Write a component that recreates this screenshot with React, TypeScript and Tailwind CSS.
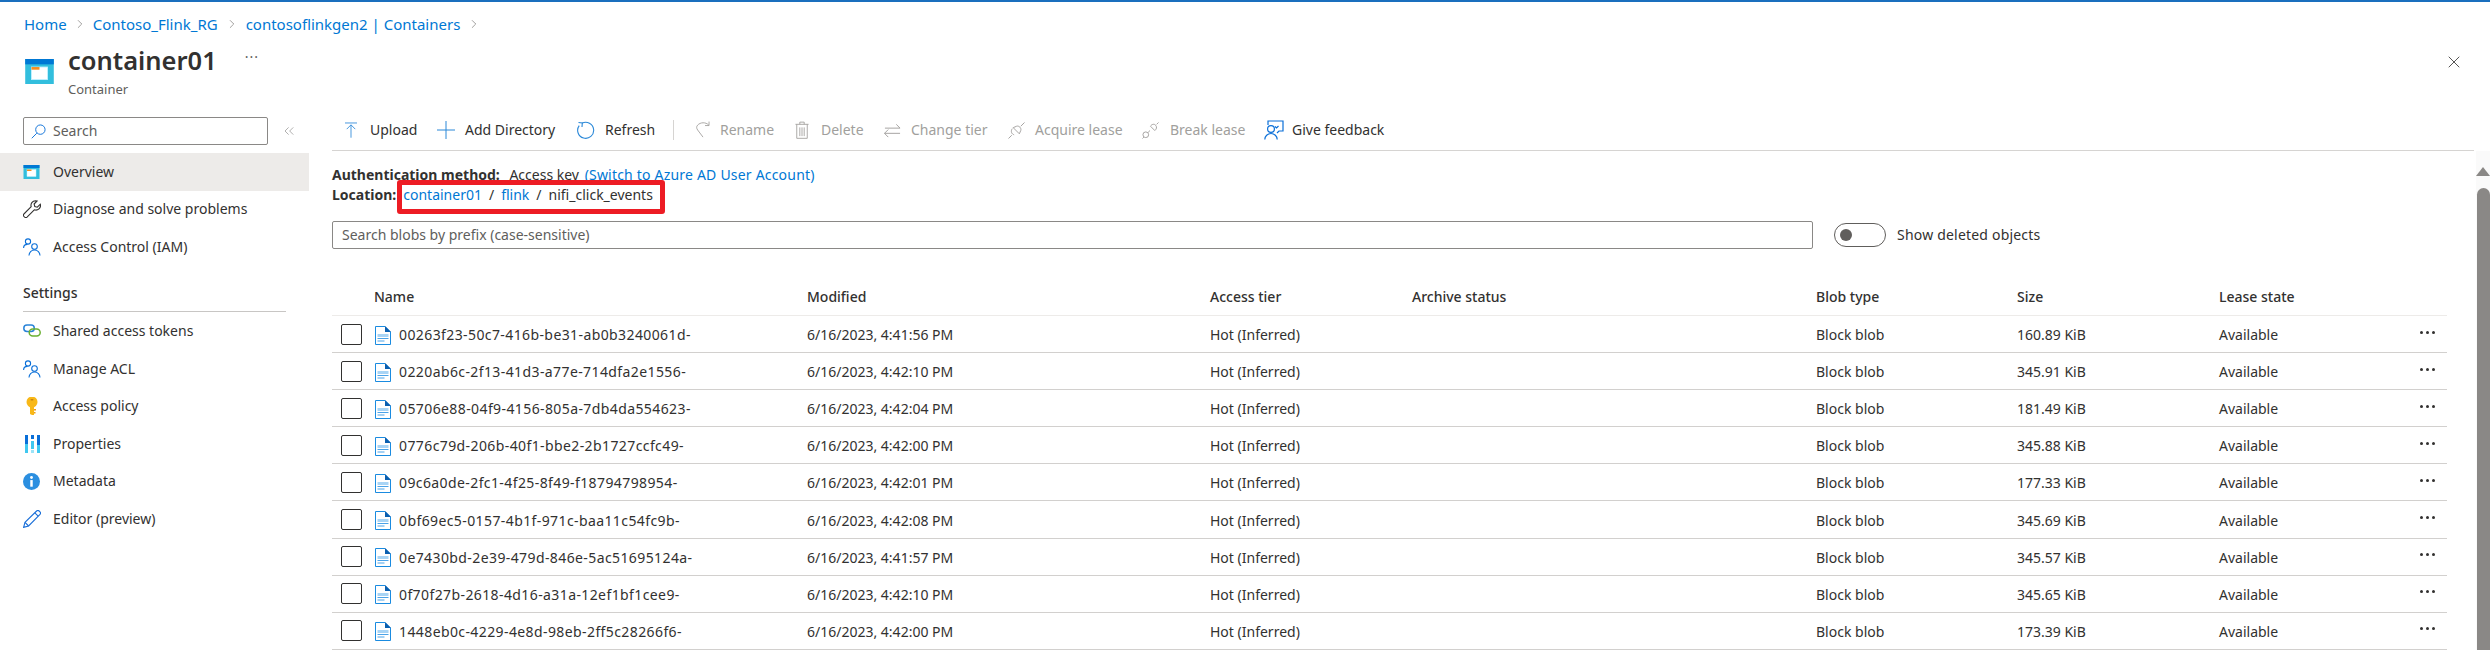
import React from 'react';
import { ChevronRight, X, ChevronsLeft } from 'lucide-react';

const ContainerIcon = ({ className }: { className: string }) => (
  <svg viewBox="0 0 32 28" className={className}>
    <rect width="32" height="28" fill="#32bedd" />
    <rect width="32" height="6" fill="#0078d4" />
    <rect x="7" y="9" width="18" height="14" fill="#fff" stroke="#c3f1ff" />
    <rect x="7" y="9" width="9" height="3" fill="#f78d1e" />
  </svg>
);

const FileIcon = () => (
  <svg viewBox="0 0 16 19" className="w-[16px] h-[19px] shrink-0">
    <path d="M.5.5h9.5l5.5 5.5v12.5H.5z" fill="#fff" stroke="#1a8be0" />
    <path d="M10 0l6 6h-6z" fill="#0a5fb0" />
    <path d="M2.5 8h11v3h-11z" fill="#a8d4f5" />
    <path d="M2.5 12.5h11M2.5 15h7" stroke="#4ba3e8" />
  </svg>
);

const PeopleIcon = () => (
  <svg viewBox="0 0 18 18" className="w-[18px] h-[18px]" fill="none" stroke="#0a6fd8" strokeWidth="1.1">
    <circle cx="5" cy="3.5" r="2.6" />
    <circle cx="11.5" cy="8.5" r="2.8" />
    <path d="M.6 10c0-2.2 1.6-3.6 3.8-3.6M6 17.6c0-3.2 2.4-5.6 5.5-5.6s5.5 2.4 5.5 5.6" />
  </svg>
);

const navTop = [
  {
    label: 'Overview',
    active: true,
    icon: <ContainerIcon className="w-[17px] h-[14px]" />,
  },
  {
    label: 'Diagnose and solve problems',
    icon: (
      <svg viewBox="0 0 18 18" className="w-[18px] h-[18px]" fill="none" stroke="#323130" strokeWidth="1.1">
        <path d="M12.5.7a4.6 4.6 0 0 0-4.3 6L.9 14a1.7 1.7 0 0 0 0 2.3l.8.8a1.7 1.7 0 0 0 2.3 0l7.3-7.3a4.6 4.6 0 0 0 6-5.6l-3 3-2.5-.7-.7-2.5 3-3c-.6-.2-1.2-.3-1.6-.3z" />
      </svg>
    ),
  },
  { label: 'Access Control (IAM)', icon: <PeopleIcon /> },
];

const navSettings = [
  {
    label: 'Shared access tokens',
    icon: (
      <svg viewBox="0 0 18 14" className="w-[18px] h-[14px]" fill="none" strokeWidth="1.5">
        <rect x=".8" y="1" width="10.5" height="6.5" rx="3.2" stroke="#2a84d8" />
        <rect x="6.2" y="5" width="11" height="7" rx="3.5" stroke="#6bb033" />
      </svg>
    ),
  },
  { label: 'Manage ACL', icon: <PeopleIcon /> },
  {
    label: 'Access policy',
    icon: (
      <svg viewBox="0 0 12 18" className="w-[12px] h-[18px] ml-[3px]">
        <circle cx="6" cy="5" r="5.5" fill="#f8b818" />
        <path d="M4 8h4v10l-2 0-2-1z" fill="#f8b818" />
        <path d="M8 12h2v1.5H8zM8 15h1.5v1.5H8z" fill="#f09c10" />
        <rect x="4.5" y="2" width="3" height="1.5" rx=".7" fill="#c98412" />
      </svg>
    ),
  },
  {
    label: 'Properties',
    icon: (
      <svg viewBox="0 0 15 18" className="w-[15px] h-[18px] ml-[2px]">
        <path d="M0 0h3v9H0zM6 0h3v4H6zM12 0h3v10h-3z" fill="#0a6fd8" />
        <path d="M0 9h3v9H0zM6 6h3v8H6zM12 10h3v8h-3z" fill="#40c8f0" />
        <path d="M6 15h3v3H6z" fill="#9be3f7" />
      </svg>
    ),
  },
  {
    label: 'Metadata',
    icon: (
      <svg viewBox="0 0 18 18" className="w-[17px] h-[17px]">
        <circle cx="9" cy="9" r="9" fill="#2b8fe0" />
        <rect x="7.7" y="7.5" width="2.6" height="7" fill="#fff" />
        <circle cx="9" cy="4.8" r="1.5" fill="#fff" />
      </svg>
    ),
  },
  {
    label: 'Editor (preview)',
    icon: (
      <svg viewBox="0 0 18 18" className="w-[18px] h-[18px]" fill="none" stroke="#1a6fd8" strokeWidth="1.1">
        <path d="M.6 17.4l1.4-5L13.6 1c.8-.7 1.8-.7 2.5 0l.9.9c.7.7.7 1.7 0 2.5L5.6 16z" />
        <path d="M2 12.4L5.6 16M11.8 2.8l3.4 3.4" />
      </svg>
    ),
  },
];

const gray = '#a19f9d';

const toolbar = [
  {
    label: 'Rename',
    box: 'w-[100px] ml-[21px]',
    slot: 'w-[25px]',
    icon: (
      <svg viewBox="0 0 18 20" className="w-[16px] h-[18px]" fill="none" stroke={gray}>
        <path d="M15.5 4.5C12 .8 6 1.2 3 4.5 1.5 6 1.5 8 3 10l6 8" />
        <path d="M15.8.5v4.5h-4.5" />
      </svg>
    ),
  },
  {
    label: 'Delete',
    box: 'w-[89px]',
    slot: 'w-[26px]',
    icon: (
      <svg viewBox="0 0 16 20" className="w-[14px] h-[18px]" fill="none" stroke={gray}>
        <path d="M.5 3.5h15M5.5 3.5V1h5v2.5M2 3.5v16h12v-16M5.5 7v10M8 7v10M10.5 7v10" />
      </svg>
    ),
  },
  {
    label: 'Change tier',
    box: 'w-[124px]',
    slot: 'w-[27px]',
    icon: (
      <svg viewBox="0 0 18 18" className="w-[17px] h-[17px]" fill="none" stroke={gray}>
        <path d="M1 6.5h16M13 2.5l4 4M.5 12h16.5M4.5 8l-4 4 4 4" />
      </svg>
    ),
  },
  {
    label: 'Acquire lease',
    box: 'w-[134px]',
    slot: 'w-[27px]',
    icon: (
      <svg viewBox="0 0 18 18" className="w-[17px] h-[17px]" fill="none" stroke={gray}>
        <path d="M.5 17.5l3.5-3.5M13.5 4.5L17.5.5M5.5 6l6.5 6.5 1.5-3.5c1-2.5-2-5.5-4.5-4.5zM4.5 7c-2 3-.5 6 2 6.5" />
      </svg>
    ),
  },
  {
    label: 'Break lease',
    box: 'w-[122px]',
    slot: 'w-[28px]',
    icon: (
      <svg viewBox="0 0 18 18" className="w-[17px] h-[17px]" fill="none" stroke={gray}>
        <circle cx="4" cy="13.5" r="3" />
        <path d="M.5 17.5l1.5-1.5M15.5 2.5l2-2M9 4.5l4.5 4.5c2-1.5 2.5-3.5 1-5.5S10 2.5 9 4.5zM6.5 11l2-2" />
      </svg>
    ),
  },
];

const rows = [
  ['00263f23-50c7-416b-be31-ab0b3240061d-', '6/16/2023, 4:41:56 PM', '160.89 KiB'],
  ['0220ab6c-2f13-41d3-a77e-714dfa2e1556-', '6/16/2023, 4:42:10 PM', '345.91 KiB'],
  ['05706e88-04f9-4156-805a-7db4da554623-', '6/16/2023, 4:42:04 PM', '181.49 KiB'],
  ['0776c79d-206b-40f1-bbe2-2b1727ccfc49-', '6/16/2023, 4:42:00 PM', '345.88 KiB'],
  ['09c6a0de-2fc1-4f25-8f49-f18794798954-', '6/16/2023, 4:42:01 PM', '177.33 KiB'],
  ['0bf69ec5-0157-4b1f-971c-baa11c54fc9b-', '6/16/2023, 4:42:08 PM', '345.69 KiB'],
  ['0e7430bd-2e39-479d-846e-5ac51695124a-', '6/16/2023, 4:41:57 PM', '345.57 KiB'],
  ['0f70f27b-2618-4d16-a31a-12ef1bf1cee9-', '6/16/2023, 4:42:10 PM', '345.65 KiB'],
  ['1448eb0c-4229-4e8d-98eb-2ff5c28266f6-', '6/16/2023, 4:42:00 PM', '173.39 KiB'],
];

const NavItem = ({ label, icon, active }: { label: string; icon: React.ReactNode; active?: boolean }) => (
  <div className={`h-[37.5px] flex items-center pl-[23px] ${active ? 'bg-[#edebe9]' : ''}`}>
    <span className="w-[30px] flex items-center justify-start">{icon}</span>
    <span>{label}</span>
  </div>
);

export default function App() {
  return (
    <div className="w-[2490px] h-[653px] overflow-hidden bg-white text-[#323130] text-[14px] leading-[18px] border-t-2 border-[#1a6fbe] font-['Noto_Sans','Open_Sans',sans-serif]">
      {/* breadcrumb */}
      <div className="h-[40px] flex items-center pl-[24px] text-[#0078d4] text-[15px] pt-[3px]">
        <span>Home</span>
        <ChevronRight className="w-[14px] h-[14px] mx-[6px] text-[#605e5c]" strokeWidth={1} />
        <span>Contoso_Flink_RG</span>
        <ChevronRight className="w-[14px] h-[14px] mx-[7px] text-[#605e5c]" strokeWidth={1} />
        <span>contosoflinkgen2 | Containers</span>
        <ChevronRight className="w-[14px] h-[14px] mx-[7px] text-[#605e5c]" strokeWidth={1} />
      </div>

      {/* title */}
      <div className="h-[71px] flex items-start pl-[24px] pr-[26px]">
        <ContainerIcon className="w-[31px] h-[25px] mt-[17px] mr-[13px]" />
        <div>
          <div className="text-[25.5px] leading-[32px] font-semibold mt-[2px]">container01</div>
          <div className="text-[13px] leading-[16px] text-[#605e5c] mt-[5px]">Container</div>
        </div>
        <div className="ml-[28px] mt-[6px] text-[#605e5c] tracking-[1px] text-[14px]">···</div>
        <X className="ml-auto mt-[10px] w-[20px] h-[20px] text-[#323130]" strokeWidth={1} />
      </div>

      <div className="flex">
        {/* sidebar */}
        <div className="w-[309px] shrink-0">
          <div className="flex h-[40px] pl-[23px] pt-[4px]">
            <div className="w-[245px] h-[28px] border border-[#8a8886] rounded-[2px] flex items-center pl-[7px]">
              <svg viewBox="0 0 16 16" className="w-[15px] h-[15px] mr-[7px]" fill="none" stroke="#0a6fd8">
                <circle cx="10" cy="6" r="5" />
                <path d="M6.2 9.8L.8 15.2" />
              </svg>
              <span className="text-[#605e5c]">Search</span>
            </div>
            <ChevronsLeft className="ml-[13px] mt-[6px] w-[16px] h-[16px] text-[#8a8886]" strokeWidth={1} />
          </div>
          <div>
            {navTop.map((n) => (
              <NavItem key={n.label} {...n} />
            ))}
          </div>
          <div className="mx-[23px] mt-[10px] h-[36px] border-b border-[#c8c6c4] font-medium w-[263px] pt-[8px]">Settings</div>
          <div className="mt-[1px]">
            {navSettings.map((n) => (
              <NavItem key={n.label} {...n} />
            ))}
          </div>
        </div>

        {/* main */}
        <div className="flex-1 relative">
          <div className="ml-[23px] mr-[16px]">
            <div className="h-[38px] pb-[3px] border-b border-[#d6d4d2] flex items-center pl-[13px]">
              <div className="w-[92px] flex items-center">
                <span className="w-[25px]">
                  <svg viewBox="0 0 14 18" className="w-[12px] h-[18px]" fill="none" stroke="#2a88d8">
                    <path d="M0 .8h14M7 18V3M2 8l5-5 5 5" />
                  </svg>
                </span>
                <span>Upload</span>
              </div>
              <div className="w-[140px] flex items-center">
                <span className="w-[28px]">
                  <svg viewBox="0 0 18 18" className="w-[18px] h-[18px]" fill="none" stroke="#2a88d8">
                    <path d="M0 9h18M9 0v18" />
                  </svg>
                </span>
                <span>Add Directory</span>
              </div>
              <div className="w-[96px] flex items-center">
                <span className="w-[28px]">
                  <svg viewBox="0 0 18 18" className="w-[18px] h-[18px]" fill="none" stroke="#2a88d8">
                    <path d="M5 2.2a8 8 0 1 1-2.8 2.4" strokeWidth="1.1" />
                    <path d="M1.5 1.5L5.3 2 5 6" strokeWidth="1.1" />
                  </svg>
                </span>
                <span>Refresh</span>
              </div>
              <div className="w-px h-[20px] bg-[#d6d4d2]" />
              {toolbar.map((t) => (
                <div key={t.label} className={`flex items-center ${t.box}`}>
                  <span className={t.slot}>{t.icon}</span>
                  <span className="text-[#a19f9d]">{t.label}</span>
                </div>
              ))}
              <div className="flex items-center">
                <svg viewBox="0 0 20 20" className="w-[20px] h-[20px] mr-[8px]" fill="none" stroke="#0a6fd8" strokeWidth="1.2">
                  <path d="M4 5V1h15v10h-4l-2 2" />
                  <circle cx="7" cy="9" r="3.4" />
                  <path d="M.8 19.5c0-3.4 2.8-6 6.2-6s6.2 2.6 6.2 6" />
                  <path d="M11 6.5l1.5 1.5 2-2" />
                </svg>
                <span>Give feedback</span>
              </div>
            </div>

            <div className="mt-[14px] leading-[20px]">
              <div>
                <span className="font-bold">Authentication method:</span> <span className="ml-[6px]">Access key</span>{' '}
                <span className="ml-[2px] tracking-[0.2px] text-[#0078d4]">(Switch to Azure AD User Account)</span>
              </div>
              <div className="flex">
                <span className="font-bold">Location:</span>
                <span className="ml-[7px] text-[#0078d4]">container01</span>
                <span className="mx-[7px]">/</span>
                <span className="text-[#0078d4]">flink</span>
                <span className="mx-[7px]">/</span>
                <span>nifi_click_events</span>
              </div>
            </div>

            <div className="flex items-center mt-[16px]">
              <div className="w-[1481px] h-[28px] border border-[#8a8886] rounded-[2px] flex items-center pl-[9px] text-[#605e5c]">
                Search blobs by prefix (case-sensitive)
              </div>
              <div className="ml-[21px] w-[52px] h-[24px] rounded-full border border-[#605e5c] flex items-center pl-[5px]">
                <div className="w-[12px] h-[12px] rounded-full bg-[#605e5c]" />
              </div>
              <span className="ml-[11px] tracking-[0.2px]">Show deleted objects</span>
            </div>

            <div className="w-[2115px]">
              <div className="mt-[31px] h-[36px] pb-[2px] border-b border-[#edebe9] grid grid-cols-[42px_433px_403px_202px_404px_201px_202px_1fr] items-center font-medium">
                <span />
                <span>Name</span>
                <span>Modified</span>
                <span>Access tier</span>
                <span>Archive status</span>
                <span>Blob type</span>
                <span>Size</span>
                <span>Lease state</span>
              </div>
              {rows.map((r) => (
                <div key={r[0]} className="h-[37.1px] pt-[2px] border-b border-[#d2d0ce] grid grid-cols-[42px_433px_403px_202px_404px_201px_202px_1fr] items-center">
                  <div className="pl-[9px] -mt-[2px]">
                    <div className="w-[21px] h-[21px] rounded-[2px] border border-[#323130]" />
                  </div>
                  <div className="flex items-center pl-[1px]">
                    <FileIcon />
                    <span className="ml-[8px] tracking-[0.4px]">{r[0]}</span>
                  </div>
                  <span>{r[1]}</span>
                  <span>Hot (Inferred)</span>
                  <span />
                  <span>Block blob</span>
                  <span>{r[2]}</span>
                  <div className="flex items-center justify-between pr-[12px]">
                    <span>Available</span>
                    <span className="flex gap-[3px] -mt-[6px]">
                      <span className="w-[3px] h-[3px] rounded-full bg-[#323130]" />
                      <span className="w-[3px] h-[3px] rounded-full bg-[#323130]" />
                      <span className="w-[3px] h-[3px] rounded-full bg-[#323130]" />
                    </span>
                  </div>
                </div>
              ))}
            </div>
          </div>

          {/* red highlight drawn over the location line */}
          <div className="absolute left-[88px] top-[67px] w-[268px] h-[34px] border-[5px] border-[#ed1c24] rounded-[3px]" />

          {/* scrollbar */}
          <div className="absolute right-0 top-[38px] bottom-0 w-[14px] bg-[#fafafa] flex flex-col items-end">
            <div className="mt-[16px] w-0 h-0 border-l-[7px] border-r-[7px] border-b-[9px] border-l-transparent border-r-transparent border-b-[#8a8886]" />
            <div className="mt-[12px] w-[13px] flex-1 rounded-t-full bg-[#8a8886]" />
          </div>
        </div>
      </div>
    </div>
  );
}
